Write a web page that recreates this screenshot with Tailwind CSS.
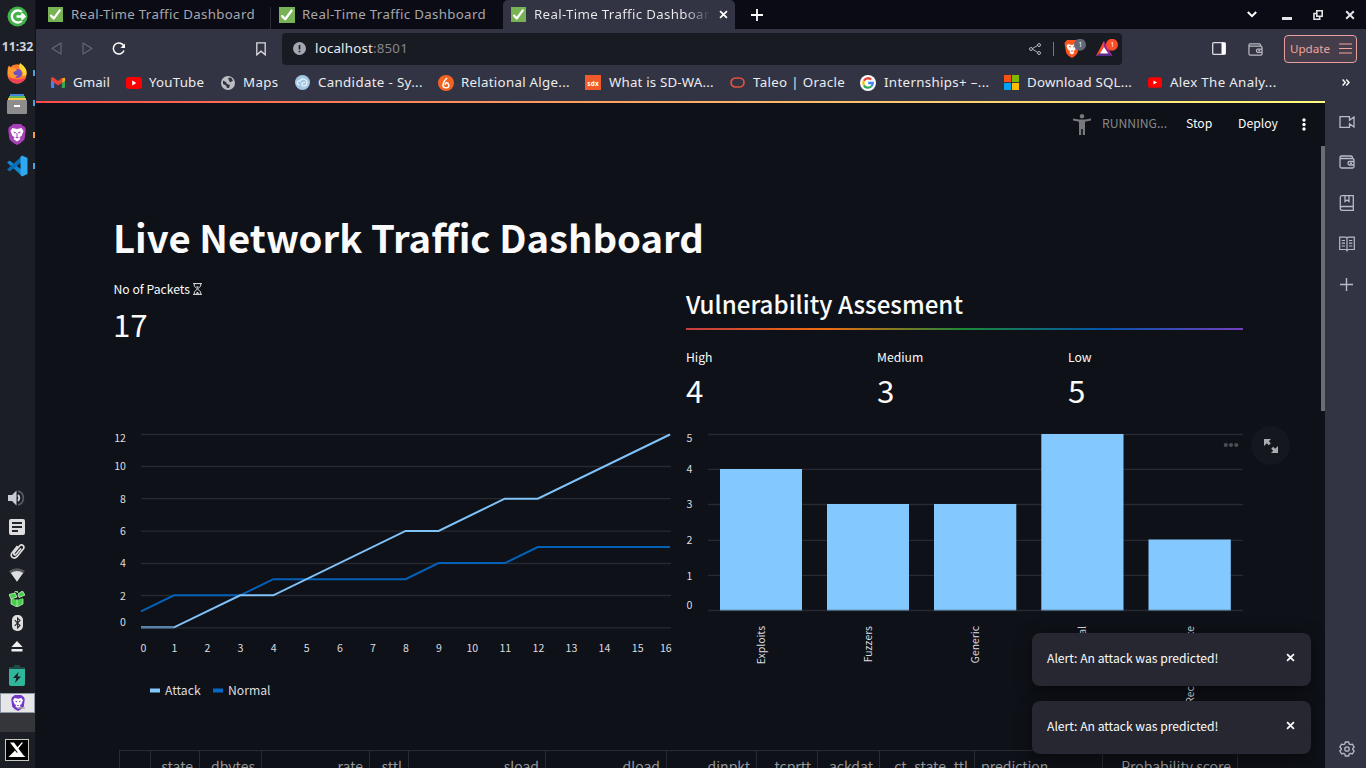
<!DOCTYPE html>
<html lang="en">
<head>
<meta charset="utf-8">
<title>Real-Time Traffic Dashboard</title>
<script src="https://cdn.jsdelivr.net/npm/@tailwindcss/browser@4"></script>
</head>
<body class="w-[1366px] h-[768px] overflow-hidden flex bg-[#0e1117] font-['Noto_Sans',sans-serif] text-white">
<svg class="hidden">
  <symbol id="check" viewBox="0 0 16 16"><rect width="16" height="16" fill="#77b255"/><path d="M3.2 9.2 6.2 12.2 12.6 3.6" fill="none" stroke="#fff" stroke-width="2.4" stroke-linecap="round" stroke-linejoin="round"/></symbol>
  <symbol id="yt" viewBox="0 0 16 12"><rect width="16" height="12" rx="3" fill="#f00"/><path d="M6.2 3.6v4.8L10.4 6z" fill="#fff"/></symbol>
  <symbol id="close" viewBox="0 0 10 10"><path d="M1.2 1.2 8.8 8.8M8.8 1.2 1.2 8.8" stroke="currentColor" stroke-width="2" fill="none"/></symbol>
  <symbol id="wallet" viewBox="0 0 16 16"><path d="M1 4.2V12.5Q1 14 2.5 14H13.5Q15 14 15 12.5V6Q15 4.500 13.5 4.500H2Q.9 4.200 1 3.200T2.300 2H12Q13.500 2 13.500 4.300M15 7.500H10.500Q9 7.500 9 9.200T10.500 11H15M11 9.300h2" fill="none" stroke="currentColor" stroke-width="1.300"/></symbol>
</svg>

<!-- Desktop panel -->
<aside class="w-9 h-full shrink-0 bg-[#1b1e24] flex flex-col items-center border-r border-[#121419]">
  <svg class="mt-[6px] size-[21px] shrink-0" viewBox="0 0 21 21"><circle cx="10.500" cy="10.500" r="10" fill="#43b04a"/><path d="M14.800 6A6 6 0 1 0 14.800 15M9.500 10.500H17M14.500 7.500l3 3-3 3" fill="none" stroke="#fff" stroke-width="2.300"/></svg>
  <div class="mt-[11px] h-[18px] leading-[18px] text-[12.300px] font-bold text-[#cdd3de]">11:32</div>
  <div class="mt-[5px] w-full h-[23px] shrink-0 flex items-center"><svg class="ml-[6px] size-[22px]" viewBox="0 0 22 22"><circle cx="11" cy="12" r="9.700" fill="#ff7b2b"/><path d="M2 15A9.700 9.700 0 0 0 20 15Q14 20 2 15" fill="#f23d5c"/><path d="M14 1q-2 4 0 6 4 3 2.500 7 5 0 4-5Q19 4 14 1" fill="#ffd83a"/><circle cx="11.500" cy="11.500" r="4.400" fill="#7250c8"/><path d="M1.500 10Q1 6 3 3.500l2 2.500Q9 5 11 8L7 10.500Q8 14 12 13 8 18 4 15 2 13 1.500 10" fill="#ff9b2e"/></svg><i class="ml-[5px] w-[2px] h-[6px] bg-[#4aa3e0]"></i></div>
  <div class="mt-[8px] w-full h-[22px] shrink-0 flex items-center"><svg class="ml-[7px] w-5 h-[21px]" viewBox="0 0 20 21"><path d="M3 1h14v3H3z" fill="#3f87d9"/><path d="M2 3h16v3H2z" fill="#62b654"/><path d="M1 5h18v3H1z" fill="#f5c74d"/><rect y="7" width="20" height="14" rx="1" fill="#8d8d8d"/><rect x="7" y="12" width="6" height="2" fill="#fff"/></svg><i class="ml-[6px] w-[2px] h-[6px] bg-[#4aa3e0]"></i></div>
  <div class="mt-[9px] w-full h-[23px] shrink-0 flex items-center"><svg class="ml-[8px] w-[18px] h-[21px]" viewBox="0 0 18 21"><path d="M5 0h8l2 2 2 1 .8 3-1.200 9Q15 18 9 21 3 18 1.400 15L.2 6 1 3l2-1z" fill="#a63fb8"/><path d="M4.500 4 9 5l4.500-1L15.500 7l-2 5-2 1 1 2-3.500 2.500L5.500 15l1-2-2-1-2-5z" fill="#fff"/><path d="M5 7.500l3 .8-1 1.500zM13 7.500l-3 .8 1 1.500zM7 13h4l-2 1.500zM8.500 9h1v4h-1z" fill="#a63fb8"/></svg><i class="ml-[7px] w-[2px] h-[6px] bg-[#f29b4a]"></i></div>
  <div class="mt-[8px] w-full h-[23px] shrink-0 flex items-center"><svg class="ml-[6px] size-[22px]" viewBox="0 0 22 22"><path d="M1 7.500 3.500 5.500 16 15v6z" fill="#1187d0"/><path d="M1 14.500 3.500 16.500 16 7V1z" fill="#0a6cb3"/><path d="M16 .5 21.500 3v16L16 21.500 14.500 20V2z" fill="#2ea8f0"/></svg><i class="ml-[5px] w-[2px] h-[6px] bg-[#4aa3e0]"></i></div>
  <svg class="mt-[312px] ml-[-4px] w-[18px] h-[18px] shrink-0" viewBox="0 0 18 18"><path d="M1 6h4l4.500-4.500v15L5 12H1z" fill="#c7cdd3"/><path d="M11 6q2.500 3 0 6" stroke="#c7cdd3" stroke-width="2" fill="none"/><path d="M11 2.200a7 7 0 0 1 0 13.600" stroke="#555a61" stroke-width="1.800" fill="none"/></svg>
  <svg class="mt-[12px] mr-px size-4 shrink-0" viewBox="0 0 16 16"><rect width="16" height="16" rx="2" fill="#dedede"/><path d="M3 4h10M3 8h10M3 12h6" stroke="#22252b" stroke-width="2"/></svg>
  <svg class="mt-[8px] mr-[2px] size-4 shrink-0" viewBox="0 0 16 16"><path d="M12 5.500 7 11.500q-1.300 1-2-.2-.5-.9.300-1.800L10.500 3q1.800-1.900 3.600-.5 1.600 1.500.1 3.600L8 13.700q-2.300 2.300-4.700.7-2.100-2-.3-4.500L8.500 3" fill="none" stroke="#dedede" stroke-width="1.700"/></svg>
  <svg class="mt-[9px] mr-px w-4 h-[14px] shrink-0" viewBox="0 0 16 14"><path d="M0 3Q8-2.500 16 3l-1.800 2.600H1.800z" fill="#55585c"/><path d="M1.800 5Q8 .8 14.200 5L8 13.800z" fill="#dedede"/></svg>
  <svg class="mt-[9px] mr-px size-4 shrink-0" viewBox="0 0 16 16"><path d="M2 7l6 2 6-2v6l-6 3-6-3z" fill="#45cf49"/><path d="M0 3.500 6 2l2 4-6 2zM9 3l4.500-3L16 4l-6 2.500zM5.500 1 8 0l1 2" fill="#45cf49" stroke="#d9f5d9" stroke-width=".8"/><path d="M8 8v8M2 8v5l6 3 6-3V8" stroke="#d9f5d9" stroke-width=".7" fill="none"/></svg>
  <svg class="mt-[8px] mr-px w-[11px] h-4 shrink-0" viewBox="0 0 11 16"><rect width="11" height="16" rx="5" fill="#dedede"/><path d="M2.700 5.200 8 10.500 5.600 13V3L8 5.500 2.700 10.800" fill="none" stroke="#22252b" stroke-width="1.100"/></svg>
  <svg class="mt-[10px] mr-[2px] w-3 h-[11px] shrink-0" viewBox="0 0 12 11"><path d="M6 0l5.600 6H.4zM.5 8h11v2.500H.5z" fill="#eee"/></svg>
  <svg class="mt-[13px] mr-px w-4 h-[21px] shrink-0" viewBox="0 0 16 21"><path d="M5 0h6v2h5v3H0V2h5z" fill="#214a45"/><path d="M0 4h16v15q0 2-2 2H2q-2 0-2-2z" fill="#30b79b"/><path d="M9.500 7 4 13h3.300L6 18l6-6.500H8.600z" fill="#1b1e24"/></svg>
  <div class="mt-[7px] h-5 w-full shrink-0 border border-[#8f98a6] bg-[#e6e6e8] flex justify-center items-center"><svg class="w-[14px] h-4" viewBox="0 0 18 21"><path d="M5 0h8l4 3 .8 3-1.200 9Q15 18 9 21 3 18 1.400 15L.2 6 1 3z" fill="#7337c8"/><path d="M4.500 4 9 5l4.500-1L15.500 7l-2 5-2 1 1 2-3.500 2.500L5.500 15l1-2-2-1-2-5z" fill="#fff"/><path d="M5 7.500l3 .8-1 1.500zM13 7.500l-3 .8 1 1.500zM7 13h4l-2 1.500z" fill="#7337c8"/><path d="M8 16h10v2H8z" fill="#aaa"/></svg></div>
  <div class="h-[19px] w-full shrink-0 bg-[#35363a]"></div>
  <svg class="mt-[7px] mr-px w-6 h-[22px] shrink-0" viewBox="0 0 24 22"><rect x=".5" y=".5" width="23" height="21" fill="#000" stroke="#c9c9c0"/><path d="M5 3.500h4L19 17h-3.500zM16.500 3.500h1.700L13 10l-1-1.200zM3.500 18 10 11.500l2 2.500 1.500-2L20.500 18z" fill="#fff"/></svg>
</aside>

<div class="flex-1 min-w-0 flex flex-col">
  <!-- Browser chrome -->
  <header class="shrink-0 h-[101px] bg-[#323443]">
    <div class="h-[29px] bg-[#0a0b14] flex items-center text-[13.300px] tracking-[.32px] text-[#a6a7ad]">
      <div class="w-[234px] h-full flex items-center pl-3"><svg class="size-[15px] shrink-0"><use href="#check"/></svg><span class="ml-2 whitespace-nowrap">Real-Time Traffic Dashboard</span></div>
      <div class="w-px h-[22px] mt-[7px] bg-[#2c2c30]"></div>
      <div class="w-[232px] h-full flex items-center pl-2"><svg class="size-4 shrink-0"><use href="#check"/></svg><span class="ml-[7px] whitespace-nowrap">Real-Time Traffic Dashboard</span></div>
      <div class="w-[232px] h-full flex items-center pl-2 bg-[#323443] rounded-t-[5px] text-[#ececf0]"><svg class="size-[15px] shrink-0"><use href="#check"/></svg><span class="ml-2 w-[178px] overflow-hidden whitespace-nowrap bg-linear-to-r from-[#ececf0] from-85% to-transparent to-99% bg-clip-text text-transparent">Real-Time Traffic Dashboard</span><svg class="ml-[7px] size-[9px] text-white"><use href="#close"/></svg></div>
      <svg class="ml-[16px] size-3" viewBox="0 0 12 12"><path d="M6 0v12M0 6h12" stroke="#fff" stroke-width="1.800"/></svg>
      <svg class="ml-auto w-[10px] h-[7px]" viewBox="0 0 10 7"><path d="M.8 1 5 5.200 9.200 1" fill="none" stroke="#fff" stroke-width="2"/></svg>
      <div class="ml-[25px] mt-[8px] w-[10px] h-[3px] bg-[#e4e4e6]"></div>
      <svg class="ml-[21px] size-[10px]" viewBox="0 0 10 10"><path d="M3.800.8h5.400v5.400H3.800zM3 3.500H1v5.700h5.700V7" fill="none" stroke="#e4e4e6" stroke-width="1.600"/></svg>
      <svg class="ml-[22px] mr-[11px] size-[10px] text-[#e4e4e6]"><use href="#close"/></svg>
    </div>
    <div class="h-[39px] flex items-center">
      <svg class="ml-[15px] w-[11px] h-[13px]" viewBox="0 0 11 13"><path d="M10 1v11L1 6.500z" fill="none" stroke="#646674" stroke-width="1.200" stroke-linejoin="round"/></svg>
      <svg class="ml-[20px] w-[11px] h-[13px]" viewBox="0 0 11 13"><path d="M1 1v11l9-5.500z" fill="none" stroke="#646674" stroke-width="1.200" stroke-linejoin="round"/></svg>
      <svg class="ml-[19px] w-[14px] h-[14px]" viewBox="0 0 14 14"><path d="M12 8.500A5.500 5.500 0 1 1 11.500 3.500" fill="none" stroke="#fff" stroke-width="1.500"/><path d="M13 1.500v4.500H8.500z" fill="#fff"/></svg>
      <svg class="ml-[130px] w-[10px] h-[14px]" viewBox="0 0 10 14"><path d="M.8.800h8.400v12L5 9.200.8 12.800z" fill="none" stroke="#dcdce2" stroke-width="1.300"/></svg>
      <div class="ml-[16px] w-[840px] h-8 rounded bg-[#191b22] flex items-center">
        <svg class="ml-[11px] size-[13px]" viewBox="0 0 13 13"><circle cx="6.500" cy="6.500" r="6.500" fill="#a4a6b1"/><path d="M6.500 3v4.500M6.500 8.700v1.600" stroke="#191b22" stroke-width="1.600"/></svg>
        <span class="ml-[9px] text-[13.300px] tracking-[.2px] text-[#ececf0]">localhost<span class="text-[#85868c]">:8501</span></span>
        <svg class="ml-auto w-3 h-3" viewBox="0 0 12 12"><path d="M9 2.200 3 5.800 9 9.700" fill="none" stroke="#b5b6bd"/><g fill="#191b22" stroke="#b5b6bd"><circle cx="10" cy="2" r="1.500"/><circle cx="2" cy="6" r="1.500"/><circle cx="10" cy="10" r="1.500"/></g></svg>
        <div class="ml-[12px] w-px h-[14px] bg-[#777984]"></div>
        <svg class="ml-[10px] w-[22px] h-[20px]" viewBox="0 0 22 20"><path d="M3 1h9l3 3-1.200 9Q13 16 8 19 2.500 16 2 13L.5 4z" fill="#fb5520"/><path d="M4 5l3.500 1L12 5l1 2-2 4-1.500 1 .8 2L8 15.500 5.500 14l.8-2-2-1L2.500 7z" fill="#fff"/><path d="M5 7.500l2 .5M11 7.500 9 8M7 12h2" stroke="#fb5520"/><circle cx="16" cy="5.800" r="6" fill="#646778"/><text x="14.500" y="8.200" font-size="6.500" fill="#fff">1</text></svg>
        <svg class="ml-[10px] mr-[4px] w-[22px] h-[20px]" viewBox="0 0 22 20"><path d="M8 2 16.500 17H0z" fill="#9b278c"/><path d="M8 2 0 17l4-1.500L8 8.500z" fill="#ff4724"/><path d="M0 17l4-3h8l4.500 3z" fill="#5b2b8c"/><path d="M8 8l4.200 6.500H4z" fill="#fff"/><circle cx="16" cy="5.800" r="6" fill="#fb4d2b"/><text x="14.500" y="8.200" font-size="6.500" fill="#fff">1</text></svg>
      </div>
      <svg class="ml-[90px] w-[14px] h-[13px]" viewBox="0 0 14 13"><rect x=".7" y=".7" width="12.600" height="11.600" rx="1" fill="none" stroke="#dcdce2" stroke-width="1.300"/><path d="M9.500 1h4v11h-4z" fill="#fff"/></svg>
      <svg class="ml-[22px] size-[15px] mt-[2px] text-[#b9bac4]"><use href="#wallet"/></svg>
      <div class="ml-[21px] w-[73px] h-7 rounded-[4px] border border-[#e8a09c] bg-[#453e4a] flex items-center text-[#f0a6a0] text-[11.600px]"><span class="ml-[5px]">Update</span><svg class="ml-auto mr-[4px] w-[13px] h-[11px]" viewBox="0 0 13 11"><path d="M0 1h13M0 5.500h13M0 10h13" stroke="#f0a6a0" stroke-width="1.200"/></svg></div>
    </div>
    <nav class="h-[29px] flex items-center text-[13.300px] text-[#ececf0] pl-[15px] whitespace-nowrap tracking-[.34px] [&>div]:leading-[18px]">
      <div class="w-[75px] flex items-center tracking-[.1px]"><svg class="mr-2 w-[14px] h-[11px]" viewBox="0 0 14 11"><path d="M0 1v9q0 1 1 1h2.200V4z" fill="#4285f4"/><path d="M14 1v9q0 1-1 1h-2.200V4z" fill="#34a853"/><path d="M10.800 1.500 14 .8v3l-3.200 2.300z" fill="#fbbc04"/><path d="M0 1.500Q.5-.5 2.500.500L7 4 11.500.500V5.500L7 8.500 0 3.500z" fill="#ea4335"/></svg><span class="pb-px">Gmail</span></div>
      <div class="w-[95px] flex items-center tracking-[.2px]"><svg class="mr-[7px] w-4 h-3"><use href="#yt"/></svg><span class="pb-px">YouTube</span></div>
      <div class="w-[74px] flex items-center"><svg class="mr-2 size-[14px]" viewBox="0 0 14 14"><circle cx="7" cy="7" r="7" fill="#bcbdc3"/><path d="M2 4.500 5 6l1 2 3 1-1 3H6L5 9.500 2 8zM7 2l3-.5 2 3-3 2z" fill="#323443"/></svg><span class="pb-px">Maps</span></div>
      <div class="w-[143px] flex items-center"><svg class="mr-2 size-[15px]" viewBox="0 0 15 15"><circle cx="7.500" cy="7.500" r="7.500" fill="#a3c8e5"/><path d="M4.500 10Q2 10 2.300 7.500 3 5.500 5 6 6 3.500 9 4q3 1 3 4t-3 3Q6 10.500 7 8.500q1-1 3-1" fill="none" stroke="#eef6fb" stroke-width="1.100"/></svg><span class="pb-px">Candidate - Sy...</span></div>
      <div class="w-[147px] flex items-center tracking-[.28px]"><svg class="mr-[7px] size-4" viewBox="0 0 16 16"><circle cx="8" cy="8" r="8" fill="#f26322"/><path d="M9 3Q5.500 6 5 9.500T8 12.800 10.800 10 8.500 7.700 7.500 10" fill="none" stroke="#fff" stroke-width="1.500"/></svg><span class="pb-px">Relational Alge...</span></div>
      <div class="w-[145px] flex items-center tracking-[.18px]"><svg class="mr-2 w-4 h-[15px]" viewBox="0 0 16 15"><rect width="16" height="15" fill="#f15a29"/><text x="2.300" y="10.500" font-size="6.500" font-weight="700" textLength="11.500" lengthAdjust="spacingAndGlyphs" fill="#fff">sdx</text></svg><span class="pb-px">What is SD-WA...</span></div>
      <div class="w-[130px] flex items-center"><svg class="mr-2 w-[15px] h-[11px]" viewBox="0 0 15 11"><rect x="1" y="1" width="13" height="9" rx="4.500" fill="none" stroke="#e3523f" stroke-width="1.700"/></svg><span class="pb-px">Taleo | Oracle</span></div>
      <div class="w-[144px] flex items-center"><svg class="mr-2 size-4" viewBox="0 0 16 16"><circle cx="8" cy="8" r="8" fill="#fff"/><g fill="none" stroke-width="2.300"><path d="M11.300 4.500A4.800 4.800 0 0 0 3.900 5.700" stroke="#ea4335"/><path d="M3.900 5.700a4.800 4.800 0 0 0 0 4.600" stroke="#fbbc04"/><path d="M3.900 10.300a4.800 4.800 0 0 0 7.300 1.200" stroke="#34a853"/><path d="M11.200 11.500A4.800 4.800 0 0 0 12.800 8H8.200" stroke="#4285f4"/></g></svg><span class="pb-px">Internships+ –...</span></div>
      <div class="w-[143px] flex items-center tracking-[.2px]"><svg class="mr-2 size-[15px]" viewBox="0 0 15 15"><path d="M0 0h7v7H0z" fill="#f65314"/><path d="M8 0h7v7H8z" fill="#7cbb00"/><path d="M0 8h7v7H0z" fill="#00a1f1"/><path d="M8 8h7v7H8z" fill="#ffbb00"/></svg><span class="pb-px">Download SQL...</span></div>
      <div class="flex items-center ml-px"><svg class="mr-2 w-[14px] h-[11px]"><use href="#yt"/></svg><span class="pb-px">Alex The Analy...</span></div>
      <svg class="ml-auto mr-[16px] w-2 h-[7px]" viewBox="0 0 8 7"><path d="M.6.500l2.700 3-2.700 3M4.300.500l2.700 3-2.700 3" fill="none" stroke="#fff" stroke-width="1.400"/></svg>
    </nav>
  </header>

  <div class="flex-1 min-h-0 flex">
    <!-- Page -->
    <main class="relative w-[1289px] shrink-0 overflow-hidden bg-[#0e1117] font-['Noto_Sans_CJK_SC',sans-serif] text-[#fafafa]">
      <div class="h-[2px] bg-linear-to-r from-[#ff4b4b] to-[#fffd80]"></div>
      <div class="h-[42px] flex items-center justify-end text-[12.200px] pr-[17px]">
        <svg class="w-[18px] h-[21px] mr-[11px]" viewBox="0 0 18 21"><g fill="#77797d"><circle cx="9" cy="2.300" r="2.200"/><path d="M0 4.500 6 5.500h6l6-1v2l-6 1.200V21h-2.200v-6H8.200v6H6V7.700L0 6.500z"/></g></svg>
        <span class="w-[84px] pb-[2px] text-[#87898e]">RUNNING...</span><span class="w-[52px] pb-[2px]">Stop</span><span class="w-[64px] pb-[2px]">Deploy</span>
        <svg class="w-1 h-[13px] mr-[2px]" viewBox="0 0 4 13"><g fill="#fff"><circle cx="2" cy="2" r="1.700"/><circle cx="2" cy="6.500" r="1.700"/><circle cx="2" cy="11" r="1.700"/></g></svg>
      </div>
      <div class="pl-[78px]">
        <h1 class="mt-[65px] ml-[-1px] h-[54px] leading-[53px] text-[38.250px] font-bold whitespace-nowrap">Live Network Traffic Dashboard</h1>
        <div class="flex h-[166px]">
          <section class="w-[572px]">
            <p class="mt-[15px] ml-[-.5px] h-5 leading-5 text-[12.200px] whitespace-nowrap flex">No of Packets<svg class="ml-[3px] mt-[4px] w-[9px] h-3" viewBox="0 0 9 12" fill="none" stroke="#e4e5e7"><path d="M0 .6h9M0 11.400h9"/><path d="M1.300 1v2.200L4.500 6 1.300 8.800V11M7.700 1v2.200L4.500 6l3.200 2.800V11" stroke-width=".9"/><path d="M2.500 10.800 4.500 8.800l2 2zM3 3.500h3L4.500 5z" fill="#e4e5e7" stroke="none"/></svg></p>
            <p class="ml-[-1px] h-[50px] leading-[50px] text-[31.300px]">17</p>
          </section>
          <section class="w-[557px]">
            <h2 class="mt-[22px] h-9 leading-9 text-[24.150px] font-medium whitespace-nowrap">Vulnerability Assesment</h2>
            <div class="mt-[6px] h-[2px] bg-[linear-gradient(to_right,#c53c40,#ee6c10,#1c8838,#0454ac,#7440bc)]"></div>
            <div class="mt-[17px] grid grid-cols-[191px_191px_1fr]">
              <div><p class="h-[18px] leading-5 text-[12.200px]">High</p><p class="h-[50px] leading-[50px] text-[31.300px]">4</p></div>
              <div><p class="h-[18px] leading-5 text-[12.200px]">Medium</p><p class="h-[50px] leading-[50px] text-[31.300px]">3</p></div>
              <div><p class="h-[18px] leading-5 text-[12.200px]">Low</p><p class="h-[50px] leading-[50px] text-[31.300px]">5</p></div>
            </div>
          </section>
        </div>
        <div class="flex h-[320px]">
          <svg class="w-[572px] h-[320px] shrink-0" viewBox="114 430 572 320" font-size="10.600" fill="#dcdde0">
            <path d="M141 434.500H671M141 466.500H671M141 498.700H671M141 531.200H671M141 563.500H671M141 595.500H671M141 627.800H671" stroke="#272a31" stroke-width="1.300"/>
            <path d="M141 611.400 174.100 595.300 240.200 595.300 273.300 579.200H405.600L438.600 563.100H504.800L537.800 547H670" fill="none" stroke="#0560b8" stroke-width="2"/>
            <path d="M141 627.300H174.100L240.200 595.300H273.300L405.600 530.900H438.600L504.800 498.700H537.800L670 434.500" fill="none" stroke="#80c3fa" stroke-width="2"/>
            <path d="M141 627.300H174.100" stroke="#597fa5" stroke-width="2"/>
            <g text-anchor="end"><text x="126" y="442">12</text><text x="126" y="470">10</text><text x="126" y="503">8</text><text x="126" y="535">6</text><text x="126" y="567">4</text><text x="126" y="599.500">2</text><text x="126" y="626">0</text></g>
            <g text-anchor="middle"><text x="143.500" y="652">0</text><text x="174.500" y="652">1</text><text x="207.500" y="652">2</text><text x="240.500" y="652">3</text><text x="273.800" y="652">4</text><text x="306.800" y="652">5</text><text x="340" y="652">6</text><text x="373" y="652">7</text><text x="406" y="652">8</text><text x="439" y="652">9</text><text x="472.300" y="652">10</text><text x="505.300" y="652">11</text><text x="538.500" y="652">12</text><text x="571.500" y="652">13</text><text x="604.500" y="652">14</text><text x="637.700" y="652">15</text><text x="665.800" y="652">16</text></g>
            <path d="M150 690.500h10" stroke="#83c9ff" stroke-width="4"/><path d="M213 690.500h10" stroke="#0668c9" stroke-width="4"/>
            <g font-size="12.200"><text x="165" y="695">Attack</text><text x="228" y="695">Normal</text></g>
          </svg>
          <svg class="w-[610px] h-[320px] shrink-0 overflow-visible" viewBox="686 430 610 320" font-size="10.600" fill="#dcdde0">
            <path d="M708 434.500H1243M708 469.400H1243M708 504.500H1243M708 540.300H1243M708 575.400H1243M708 610.500H1243" stroke="#272a31" stroke-width="1.300"/>
            <g fill="#83c9ff"><path d="M720 469h82v141h-82zM827 504h82v106h-82zM934 504h82.300v106h-82.300zM1041.300 434h82.200v176h-82.200zM1148.500 539.500h82.300v70.500h-82.300z"/></g>
            <path d="M720 610h82M827 610h82M934 610h82M1041.300 610h82.200M1148.500 610h82.300" stroke="#6996c0"/>
            <g text-anchor="end"><text x="692.500" y="442">5</text><text x="692.500" y="473">4</text><text x="692.500" y="508">3</text><text x="692.500" y="544">2</text><text x="692.500" y="579.500">1</text><text x="692.500" y="608.500">0</text></g>
            <g text-anchor="end" font-size="10.400"><text transform="translate(765 626)rotate(-90)">Exploits</text><text transform="translate(872 626)rotate(-90)">Fuzzers</text><text transform="translate(979 626)rotate(-90)">Generic</text><text transform="translate(1086 626)rotate(-90)">Normal</text><text transform="translate(1194 626)rotate(-90)">Reconnaissance</text></g>
            <g fill="#4b4e54"><circle cx="1225.800" cy="445" r="2.100"/><circle cx="1231" cy="445" r="2.100"/><circle cx="1236.300" cy="445" r="2.100"/></g>
            <circle cx="1270.500" cy="445.500" r="19.500" fill="#14171e"/>
            <path d="M1264 439h7l-2.200 2.200 2 2-2 2-2-2-2.800 2.800zM1278 453h-7l2.200-2.200-2-2 2-2 2 2 2.800-2.800z" fill="#a9abb0"/>
          </svg>
        </div>
        <div class="ml-[5px] w-[1119px] h-[34px] grid grid-cols-[31px_49px_62px_108px_39px_137px_121px_90px_61px_62px_95px_128px_135px] border-t border-l border-[#272a31] text-[14px] leading-[30px] text-[#96979b] text-right [&>div]:border-r [&>div]:border-[#272a31] [&>div]:pr-[6px] [&>div]:whitespace-nowrap">
          <div></div><div>state</div><div>dbytes</div><div>rate</div><div>sttl</div><div>sload</div><div>dload</div><div>dinpkt</div><div>tcprtt</div><div>ackdat</div><div>ct_state_ttl</div><div class="text-left pl-[6px]">prediction</div><div>Probability score</div>
        </div>
      </div>
      <!-- Scrollbar thumb and toasts over the page -->
      <div class="absolute right-0 top-[45px] w-1 h-[265px] bg-[#6b6d70]"></div>
      <div class="absolute left-[996px] top-[532px] w-[279px] flex flex-col gap-[15px] text-[12.150px]">
        <div class="h-[53px] rounded-lg bg-[#262730] shadow-[0_4px_16px_rgba(0,0,0,.5)] flex items-center pl-[15px] pr-[16px]"><span class="pb-[2px]">Alert: An attack was predicted!</span><svg class="ml-auto mb-[4px] size-[9px]"><use href="#close"/></svg></div>
        <div class="h-[53px] rounded-lg bg-[#262730] shadow-[0_4px_16px_rgba(0,0,0,.5)] flex items-center pl-[15px] pr-[16px]"><span class="pb-[2px]">Alert: An attack was predicted!</span><svg class="ml-auto mb-[4px] size-[9px]"><use href="#close"/></svg></div>
      </div>
    </main>
    <!-- Browser sidebar -->
    <aside class="flex-1 bg-[#323443] flex flex-col items-center text-[#b9bac9] pl-[2px]">
      <svg class="mt-[15px] w-4 h-3 shrink-0" viewBox="0 0 16 12"><path d="M1 .700h9.500v3.600L15 1v10L10.500 7.700v3.600H1z" fill="none" stroke="currentColor" stroke-width="1.300"/></svg>
      <svg class="mt-[26px] size-4 shrink-0"><use href="#wallet"/></svg>
      <svg class="mt-[25px] size-4 shrink-0" viewBox="0 0 16 16"><path d="M3 .700H14.300V15.300H3Q1.300 15.300 1.300 13.500V2.300Q1.300.700 3 .700ZM1.300 13.500Q1.300 11.500 3 11.500H14.300M6 1v5.500L8 5l2 1.500V1" fill="none" stroke="currentColor" stroke-width="1.300"/></svg>
      <svg class="mt-[25px] size-4 shrink-0" viewBox="0 0 16 16"><path d="M.700 1.200H6.500Q8 1.200 8 2.500 8 1.200 9.500 1.200H15.300V13.500H9.500Q8 13.500 8 15.500 8 13.500 6.500 13.500H.700ZM8 2.500V15M2.700 4.500H6M2.700 7.200H6M2.700 10H6M10 4.500h3.300M10 7.200h3.300M10 10h3.300" fill="none" stroke="currentColor" stroke-width="1.200"/></svg>
      <svg class="mt-[26px] size-[13px] shrink-0" viewBox="0 0 13 13"><path d="M6.500 0v13M0 6.500h13" stroke="currentColor" stroke-width="1.400"/></svg>
      <svg class="mt-auto mb-[11px] size-4 shrink-0" viewBox="0 0 16 16"><path d="M6.300 1h3.400l.5 2 1.200.700 2-.600L15.200 6 13.700 7.400v1.200L15.200 10l-1.800 2.900-2-.6-1.200.7-.5 2H6.300l-.5-2-1.200-.7-2 .6L.800 10l1.500-1.400V7.400L.800 6l1.800-2.900 2 .6L5.800 3z" fill="none" stroke="currentColor" stroke-width="1.300" stroke-linejoin="round"/><circle cx="8" cy="8" r="2.200" fill="none" stroke="currentColor" stroke-width="1.300"/></svg>
    </aside>
  </div>
</div>
</body>
</html>
